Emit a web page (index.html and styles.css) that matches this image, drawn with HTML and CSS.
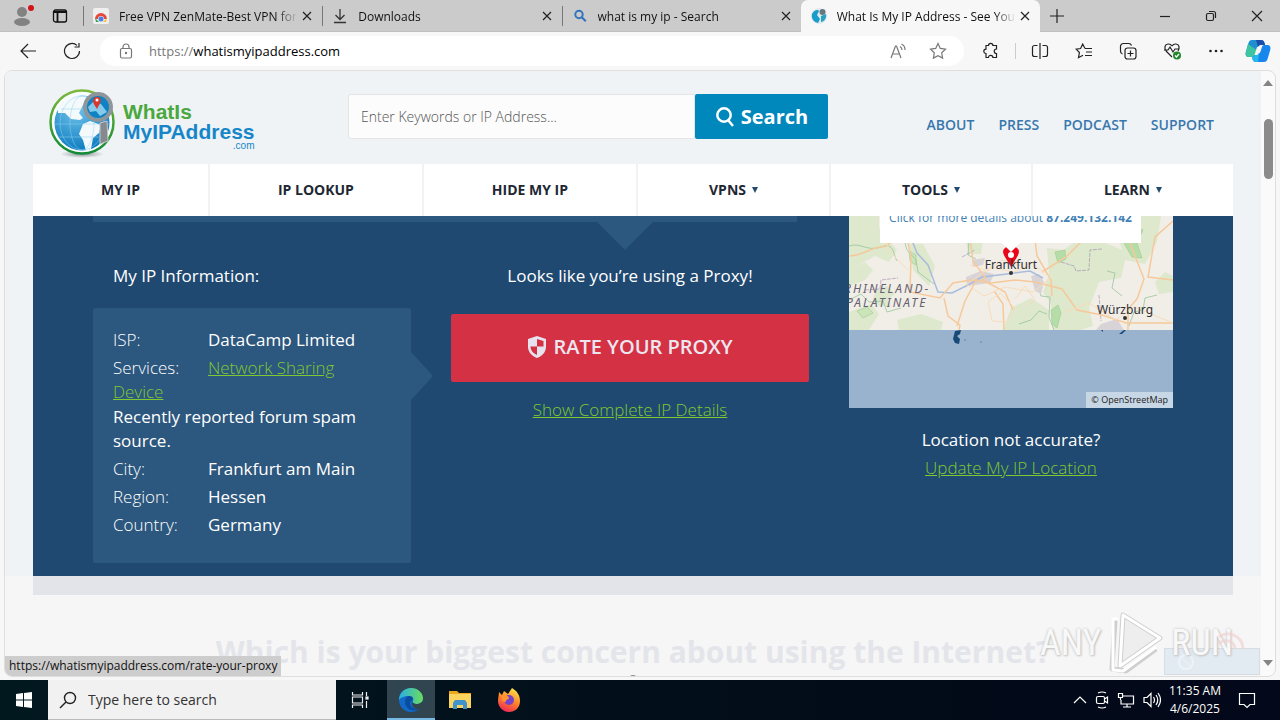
FILE: index.html
```html
<!DOCTYPE html>
<html lang="en">
<head>
<meta charset="utf-8">
<title>What Is My IP Address</title>
<link rel="stylesheet" href="styles.css">
</head>
<body>
<div class="tabbar">
  <button class="tabbar-btn profile" aria-label="Profile">
    <svg width="26" height="26" viewBox="0 0 26 26"><circle cx="13" cy="9" r="5" fill="#828282"/><ellipse cx="13" cy="19" rx="8" ry="4" fill="#828282"/><circle cx="22" cy="5" r="3" fill="#d3131c"/></svg>
  </button>
  <button class="tabbar-btn" aria-label="Workspaces">
    <svg width="16" height="16" viewBox="0 0 16 16" fill="none" stroke="#111" stroke-width="1.3"><rect x="1.5" y="2" width="13" height="12" rx="2"/><path d="M2 4h12M5.500 4v10" stroke-width="1.800"/></svg>
  </button>
  <div class="tabs">
    <div class="tab">
      <svg width="16" height="16" viewBox="0 0 16 16"><rect width="16" height="16" rx="2" fill="#efefef"/><path d="M2 11a6 6 0 0 1 12 0l-3 0a3 3 0 0 0-6 0z" fill="#e5493a"/><path d="M2 10l4 4H3z" fill="#34a853"/><path d="M14 10l-4 4h3z" fill="#fbc02d"/><circle cx="8" cy="11" r="2.500" fill="#4a80e8"/></svg>
      <span class="tab-title">Free VPN ZenMate-Best VPN for Chrome</span>
      <button class="close" aria-label="Close tab"><svg width="10" height="10" viewBox="0 0 10 10"><path d="M1 1l8 8M9 1l-8 8"/></svg></button>
    </div>
    <div class="tab">
      <svg width="16" height="16" viewBox="0 0 16 16" fill="none" stroke="#333" stroke-width="1.300"><path d="M8 1v10M3.500 7L8 11.500 12.500 7M2 14.500h12"/></svg>
      <span class="tab-title">Downloads</span>
      <button class="close" aria-label="Close tab"><svg width="10" height="10" viewBox="0 0 10 10"><path d="M1 1l8 8M9 1l-8 8"/></svg></button>
    </div>
    <div class="tab">
      <svg width="16" height="16" viewBox="0 0 16 16" fill="none" stroke="#2f74bd" stroke-width="2"><circle cx="7" cy="6.500" r="3.700"/><path d="M9.800 9.300l4 4"/></svg>
      <span class="tab-title">what is my ip - Search</span>
      <button class="close" aria-label="Close tab"><svg width="10" height="10" viewBox="0 0 10 10"><path d="M1 1l8 8M9 1l-8 8"/></svg></button>
    </div>
    <div class="tab active">
      <svg width="16" height="16" viewBox="0 0 16 16"><circle cx="8" cy="8" r="8" fill="#dfe9ee"/><path d="M1 6c2-4 6-5 7-3L6 7l3 4-2 4C3 14 0 11 1 6z" fill="#189cc9"/><path d="M10 8l5-2c1 4-2 8-5 8z" fill="#26a3c4"/><circle cx="11.500" cy="4" r="3" fill="#687780"/></svg>
      <span class="tab-title">What Is My IP Address - See Your Public</span>
      <button class="close" aria-label="Close tab"><svg width="10" height="10" viewBox="0 0 10 10"><path d="M1 1l8 8M9 1l-8 8"/></svg></button>
    </div>
  </div>
  <button class="newtab" aria-label="New tab"><svg width="14" height="14" viewBox="0 0 14 14"><path d="M7 0v14M0 7h14"/></svg></button>
  <div class="win-controls">
    <button aria-label="Minimize"><svg width="12" height="12" viewBox="0 0 12 12"><path d="M1 6.500h10"/></svg></button>
    <button aria-label="Restore"><svg width="12" height="12" viewBox="0 0 12 12"><rect x="1.500" y="3.500" width="7" height="7" rx="1.500"/><path d="M4 1.500h4.500a2 2 0 0 1 2 2V8"/></svg></button>
    <button aria-label="Close"><svg width="12" height="12" viewBox="0 0 12 12"><path d="M1 1l10 10M11 1L1 11"/></svg></button>
  </div>
</div>

<div class="toolbar">
  <button class="tool" aria-label="Back"><svg width="18" height="18" viewBox="0 0 18 18"><path d="M17 9H2M9 2L2 9l7 7"/></svg></button>
  <button class="tool" aria-label="Refresh"><svg width="18" height="18" viewBox="0 0 18 18"><path d="M16.500 9a7.500 7.500 0 1 1-2.500-5.600M16 1v4h-4.500"/></svg></button>
  <div class="address">
    <svg class="lock" width="14" height="16" viewBox="0 0 14 16"><rect x="1.500" y="5.500" width="11" height="9.500" rx="1.500"/><path d="M4 5.500V4a3 3 0 0 1 6 0v1.500"/><circle cx="7" cy="10" r=".6"/></svg>
    <div class="url"><span>https://</span>whatismyipaddress.com</div>
    <button class="in-address" aria-label="Read aloud"><svg width="18" height="16" viewBox="0 0 18 16"><path d="M2 15L6.500 3h1L12 15M3.500 11h7M11 3.500c1.500.8 2 2 2 3.500M12.500 1c2.500 1.200 3.700 3.300 3.500 6"/></svg></button>
    <button class="in-address" aria-label="Add to favorites"><svg width="18" height="18" viewBox="0 0 18 18"><path d="M9 1.500l2.300 4.900 5.200.7-3.800 3.700.9 5.300L9 13.600l-4.600 2.500.9-5.300L1.500 7.100l5.200-.7z"/></svg></button>
  </div>
  <button class="tool ext" aria-label="Extensions"><svg width="18" height="18" viewBox="0 0 18 18"><path d="M4 3.500h2.500a2.200 2.200 0 0 1 4.400 0h3.600V7a2 2 0 0 0 0 4.500v4h-3.600a2.200 2.200 0 0 0-4.400 0H4v-4a2.200 2.200 0 1 1 0-4.400z"/></svg></button>
  <i class="divider"></i>
  <button class="tool" aria-label="Split screen"><svg width="18" height="18" viewBox="0 0 18 18"><path d="M6.500 3.500h-3a2 2 0 0 0-2 2v7a2 2 0 0 0 2 2h3M11.500 3.500h3a2 2 0 0 1 2 2v7a2 2 0 0 1-2 2h-3M9 1v16"/></svg></button>
  <button class="tool" aria-label="Favorites"><svg width="18" height="18" viewBox="0 0 18 18"><path d="M10 6.500L7.700 2 5.600 6.500l-4.500.6 3.300 3.400-.9 5.200L8 13.200M10 6.500h7M11 10h6M10 13.500h7"/></svg></button>
  <button class="tool" aria-label="Collections"><svg width="18" height="18" viewBox="0 0 18 18"><rect x="6" y="6" width="11" height="11" rx="2.500"/><path d="M11.500 8.500v6M8.500 11.500h6M3.500 12A3 3 0 0 1 1.500 9V4a3 3 0 0 1 3-2.500h5a3 3 0 0 1 3 2"/></svg></button>
  <button class="tool" aria-label="Browser essentials"><svg width="18" height="18" viewBox="0 0 18 18"><path d="M9 4C7 1 3 1.500 2 4.500c-.5 2 0 3.500 1.500 5L9 15M9 4c2-3 6-2.500 7 .5.400 2 0 3-1 4.500M1 8h4l2-3 3 5 2-3h4"/><circle cx="14" cy="13.500" r="4" fill="#23862d" stroke="none"/><path d="M12 13.500l1.500 1.500 2.500-3" stroke="#fff"/></svg></button>
  <button class="tool" aria-label="Settings and more"><svg width="18" height="18" viewBox="0 0 18 18"><g fill="#222" stroke="none"><circle cx="3.500" cy="9" r="1.300"/><circle cx="9" cy="9" r="1.300"/><circle cx="14.500" cy="9" r="1.300"/></g></svg></button>
  <button class="tool copilot" aria-label="Copilot"><svg width="26" height="24" viewBox="0 0 26 24"><g stroke="none"><path d="M7 1h9c2 0 3 1 3.500 3l.5 2h-4c-2 0-3 1-3.600 3l-1.700 6C10 17 9 18 7 18H4c-3 0-4-2-3.200-5l2.500-8.500C4 2 5 1 7 1z" fill="#1f8fd0"/><path d="M3 5L1 13c-.8 3 .5 5 3 5h3c2 0 3-1 3.500-3l1-4z" fill="#3cc5a0"/><path d="M16 1c2 0 3 1 3.500 3l.6 2H16c-1.500 0-2.500.5-3 2L11 1z" fill="#1b4ea8"/><path d="M19 6h3c3 0 4 2 3.200 5l-2.500 8.500C22 22 21 23 19 23h-8c-2 0-3-1-3.500-3L7 18c2 0 3-1 3.500-3h2c1.500 0 2.500-1 3-2.500L17 8c.4-1.300 1-2 2-2z" fill="#1787ee"/><path d="M7 18l.5 2c.5 2 1.500 3 3.500 3h2l1-8h-3.500c-.5 2-1.500 3-3.500 3z" fill="#24b8ec"/><path d="M12 8l-2.500 8h3L15 8z" fill="#f7f7f8"/></g></svg></button>
</div>

<div class="viewport">
  <div class="page">
    <div class="upper">
      <div class="container">
        <header class="site-header">
          <a class="brand" href="#" aria-label="WhatIsMyIPAddress.com">
            <svg width="70" height="72" viewBox="0 0 70 72">
              <defs>
                <linearGradient id="ring" x1="0" y1="0" x2="0" y2="1"><stop offset="0" stop-color="#7db93c"/><stop offset="1" stop-color="#128a36"/></linearGradient>
                <radialGradient id="sea" cx=".4" cy=".25" r=".8"><stop offset="0" stop-color="#72c4ea"/><stop offset="1" stop-color="#0878be"/></radialGradient>
                <radialGradient id="shade"><stop offset="0" stop-color="#8c9298"/><stop offset="1" stop-color="#eff3f5"/></radialGradient>
              </defs>
              <ellipse cx="33" cy="65" rx="22" ry="4" fill="url(#shade)"/>
              <circle cx="33" cy="33" r="31.500" fill="#f9fcfd" stroke="url(#ring)" stroke-width="2.500"/>
              <circle cx="33" cy="34" r="27.500" fill="url(#sea)"/>
              <path d="M9 19C15 8 26 5 37 7l3 6-6 3-4 8 4 5-3 2-9-1-6-6-7 0z" fill="#f4fafc"/>
              <path d="M34 35l7-3 11 4-2 8-6 5-2 11-5 2-3-11-4-6z" fill="#f4fafc"/>
              <g fill="none" stroke="#8ed2f2" stroke-width=".5"><ellipse cx="33" cy="34" rx="12" ry="27"/><ellipse cx="33" cy="34" rx="22" ry="27"/><path d="M6 35h54M10 48h46M12 20h40"/></g>
              <path d="M51 34l7-2 1 20-8 3z" fill="#858a8f" stroke="#c4c8cb"/>
              <circle cx="49" cy="18" r="13" fill="#0d83c5" stroke="#8f969b" stroke-width="4"/>
              <path d="M39 18l6-6 7 3 6 8-7 4-4-5-6 1z" fill="#85caea"/>
              <path d="M48 20c-3-5-5-7-3.500-10 1.500-3 6-3 7 0 1 3-1 5-3.500 10z" fill="#d8392e"/><circle cx="48" cy="11" r="1.500" fill="#fff"/>
            </svg>
            <span class="wordmark"><span class="w1">WhatIs</span><span class="w2">MyIPAddress</span><span class="w3">.com</span></span>
          </a>
          <form class="search">
            <input type="text" aria-label="Enter Keywords or IP Address" placeholder="Enter Keywords or IP Address...">
            <button type="button"><svg width="20" height="20" viewBox="0 0 20 20" fill="none" stroke="#fff" stroke-width="2.500"><circle cx="9" cy="8" r="6.700"/><path d="M13 13l5 6"/></svg>Search</button>
          </form>
          <nav class="toplinks" aria-label="Site"><a href="#">ABOUT</a><a href="#">PRESS</a><a href="#">PODCAST</a><a href="#">SUPPORT</a></nav>
        </header>
        <nav class="mainnav" aria-label="Main">
          <a href="#">MY IP</a><a href="#">IP LOOKUP</a><a href="#">HIDE MY IP</a><a class="more" href="#">VPNS<i></i></a><a class="more" href="#">TOOLS<i></i></a><a class="more" href="#">LEARN<i></i></a>
        </nav>
        <main class="hero">
          <div class="hero-main">
            <div class="strip"></div>
            <div class="cols">
              <section class="info">
                <h2>My IP Information:</h2>
                <div class="card">
                  <p><span>ISP:</span>DataCamp Limited</p>
                  <p class="tight"><span>Services:</span><a href="#">Network Sharing Device</a></p>
                  <p>Recently reported forum spam source.</p>
                  <p><span>City:</span>Frankfurt am Main</p>
                  <p><span>Region:</span>Hessen</p>
                  <p><span>Country:</span>Germany</p>
                </div>
              </section>
              <section class="proxy">
                <h2>Looks like you’re using a Proxy!</h2>
                <button class="rate"><svg width="20" height="22" viewBox="0 0 20 22"><path d="M10 0l9 3v8c0 5-4 9-9 11-5-2-9-6-9-11V3z" fill="#e6e3ef"/><path d="M10 3l6.500 2v5.500H10zM10 10.500V19c-3.500-1.500-6.500-4.500-6.500-8.500z" fill="#d43145"/></svg>RATE YOUR PROXY</button>
                <a href="#">Show Complete IP Details</a>
              </section>
            </div>
          </div>
          <section class="location">
            <div class="map">
              <svg class="tiles" viewBox="0 0 324 114" preserveAspectRatio="xMidYMin slice" aria-hidden="true">
                <rect width="324" height="114" fill="#f1eee8"/>
                <g fill="#dde8cd">
                  <path d="M0 0h30v12l18 22-8 12-14-6-26 14zM0 54l16-8 8 8-8 10-16 6zM28 74l10-4 8 8-8 6 4 6-12 0-6-8z"/>
                  <path d="M60 28l14 0 12 22-6 20-16-16zM0 96l22-8 8 10-10 16H0zM48 104l24-6 22 8-2 8H50zM116 24l18 0-2 14-12 0z"/>
                  <path d="M198 32l16 2 12-8h28l24 10-6 26-22 4-10 26 4 18-30 10-10-6-2-26-8-12 6-18zM162 92l20-10 18 12v20h-46z"/>
                  <path d="M272 0h40l-4 26-12 22-20-4-6-20zM306 66l10-10 8 4v16l-14 2z"/>
                </g>
                <g fill="#b6dda8" stroke="#9dc993" stroke-width=".6"><path d="M272 16l9-9 13 7-6 13 5 15-10-1-7-12zM206 36l10-2 1 9-8 4zM202 94l7-5 3 8-4 15-5-4z"/><path d="M60 35l7 4 0 10-6-4zM8 95l10-4 6 6-10 5z" fill="#cbe4b8"/></g>
                <g fill="none" stroke="#97c59a" stroke-width=".8"><path d="M0 30c12-4 18 6 32 1s12 8 16 14M54 20l4 14 9 10 2 12 16 12M0 84l12-6 8 8 14-1 4 11 14-4M120 25l-1 14 8 4M188 64l4 16 9 1-1 20 5 13M258 55l8 2-3 15 10 8"/><path d="M170 108l12-4 8-9 8 3M280 110l5-14 9-2 2-12 12-3"/></g>
                <g fill="none" stroke="#9c86aa" stroke-width=".6" stroke-dasharray="4 1"><path d="M212 46l13 4 2 5 13-1 1-20 12-1M16 74l15-1 1-9 17-2M250 79l2 26M113 41l13-7"/></g>
                <g fill="#d8d3d6"><path d="M117 61l15-6 13 3-4 9-23 3zM182 60l8-2 5 8-3 12-6-3zM252 108l16-5 7 11h-28zM123 44l13-2-2 7-10 2z"/></g>
                <path d="M60 17l8 20 11 12 10 27 14 1 14-7 16-9 25-3 23-3 13 7" fill="none" stroke="#a9bcdc" stroke-width="1.500"/>
                <g fill="none" stroke="#f6c99b" stroke-width="1.500">
                  <path d="M0 40c14 0 20-8 32-9s12-13 25-14l5 24-1 35 30 6 13-15 18-3 20 3 24-3 20 2 27 7 15 21 25 5 24 8h67"/>
                  <path d="M120 16l4 29 13 18M145 75l9 13 1 26M95 82l4 18 12 9-1 5M108 110l8-25 12-22M193 56l24-15 16-16 14-9M278 19l8 21 9 23-7 20-9 10 0 21M324 5l-18 16-7 40 25 3M185 16l3 24 14 24 1 16M164 94l-8-18-24-13"/>
                </g>
                <g fill="none" stroke="#f8dcbc" stroke-width="1"><path d="M118 68l24-17 23 5 18-9 19 15-18 14-28-5-21 9-18-12M139 86l12-9 15 15-9 14-14-1zM166 83l10-13 10 14-10 7M121 49l18 6 14-11 21 6M216 96l24-9 27 17 18-13 39 16M32 14l9 22 18 18"/></g>
                <path d="M162 49l-6-10c-3-6 3-10 6-4 3-6 9-2 6 4z" fill="#e8081a" stroke="#e8081a" stroke-width="2"/><circle cx="162" cy="39" r="3" fill="#fff"/>
                <g font-family="Noto Sans, Open Sans, sans-serif" fill="#303034">
                  <text x="162" y="53" font-size="12" text-anchor="middle">Frankfurt</text>
                  <text x="276" y="98" font-size="12" text-anchor="middle">Würzburg</text>
                  <g font-style="italic" font-size="12" fill="#66606f" letter-spacing="2"><text x="-5" y="77">RHINELAND-</text><text x="-3" y="91">PALATINATE</text></g>
                </g>
                <circle cx="162" cy="57" r="2" fill="#333"/><circle cx="276" cy="102" r="2" fill="#333"/>
              </svg>
              <div class="popup"><a href="#">Click for more details about <b>87.249.132.142</b></a></div>
              <svg class="specks" width="324" height="16" viewBox="0 0 324 16" aria-hidden="true"><path d="M106 1l6-1-1 4-3 2 3 3-1 5-4-1-2-4 1-4zM270 4l5-4h2l-4 4zM252 0h2v2z" fill="#174a77"/><path d="M115 10h2M131 12h2" stroke="#6688a8"/></svg>
              <div class="credit">© OpenStreetMap</div>
            </div>
            <p class="accuracy">Location not accurate?<br><a href="#">Update My IP Location</a></p>
          </section>
        </main>
      </div>
    </div>
    <div class="container">
      <div class="band"></div>
      <h1 class="question">Which is your biggest concern about using the Internet?</h1>
    </div>
    <i class="dot"></i>
  </div>
  <div class="scrollbar">
    <svg width="10" height="6" viewBox="0 0 10 6"><path d="M0 6L5 0l5 6z"/></svg>
    <i></i>
    <svg width="10" height="6" viewBox="0 0 10 6"><path d="M0 0l5 6 5-6z"/></svg>
  </div>
  <div class="status">https://whatismyipaddress.com/rate-your-proxy</div>
  <div class="badge"><svg width="30" height="18" viewBox="0 0 30 18"><circle cx="13" cy="9" r="7" fill="none" stroke="#eef3f8" stroke-width="2"/><path d="M8 4l10 10" stroke="#eef3f8"/></svg></div>
  <div class="watermark">
    <span>ANY</span>
    <svg width="60" height="62" viewBox="0 0 60 62"><g fill="#eeeeee" stroke="#cfcfcf" stroke-width="5" stroke-linejoin="round"><path d="M17 3L54 26 14 54z"/><path d="M9 8L6 57l14 2 30-22" fill="none"/></g><g fill="none" stroke="#fff" stroke-width="3" stroke-linejoin="round"><path d="M17 3L54 26 14 54z"/><path d="M12 7H7v51l10 1 33-24"/></g></svg>
    <span>RUN</span>
    <svg class="waves" width="30" height="24" viewBox="0 0 30 24" fill="none" stroke="#f2cfcf" stroke-width="3" opacity=".6"><path d="M2 10a15 15 0 0 1 24 11M2 17a9 9 0 0 1 16 5"/></svg>
  </div>
</div>

<footer class="taskbar">
  <button class="start" aria-label="Start"><svg width="16" height="16" viewBox="0 0 16 16" fill="#fff"><path d="M0 2l7-1v6.500H0zM8 1l8-1v7.500H8zM0 8.500h7V15l-7-1zM8 8.500h8V16l-8-1z"/></svg></button>
  <label class="tasksearch"><svg width="18" height="18" viewBox="0 0 18 18" fill="none" stroke="#222" stroke-width="1.400"><circle cx="11" cy="7" r="5.500"/><path d="M7 11l-6 6"/></svg><input type="text" aria-label="Search" placeholder="Type here to search"></label>
  <button class="app taskview" aria-label="Task view"><svg width="18" height="18" viewBox="0 0 18 18" fill="none" stroke="#eee" stroke-width="1.200"><path d="M1.500 1v3h10V1M1.500 17v-3h10v3M1.500 6h10v6h-10zM15.500 1v4M15.500 10v7"/><rect x="15" y="6" width="2" height="2" fill="#eee"/></svg></button>
  <button class="app current" aria-label="Microsoft Edge"><svg width="24" height="24" viewBox="0 0 24 24"><defs><linearGradient id="edge"><stop offset="0" stop-color="#2aaee6"/><stop offset="1" stop-color="#6bdc5b"/></linearGradient></defs><circle cx="12" cy="12" r="12" fill="#1269c7"/><path d="M0 12C0 5 5 0 12 0s12 5 12 10c0 4-3 6-6 6s-5-1-4-3 0-5-4-5c-5 0-9 2-10 4z" fill="url(#edge)"/><path d="M10 8c-4 1-5 6-3 10s8 6 13 3c-5 1-9-2-9-6 0-2 2-3 3-4 0-2-2-3-4-3z" fill="#0a4d9e"/><path d="M14 13c-1 2 1 3 4 3 2 0 4-1 6-3v6l-4 2c-5 1-9-4-6-8z" fill="#30454f"/></svg></button>
  <button class="app" aria-label="File Explorer"><svg width="22" height="20" viewBox="0 0 22 20"><path d="M0 1h8l2 2h12v4H0z" fill="#e9a820"/><path d="M0 4h22v14H0z" fill="#fbd45f"/><path d="M4 19v-6l2-3h10l2 3v6h-4v-4H8v4z" fill="#3e94cb"/></svg></button>
  <button class="app" aria-label="Firefox"><svg width="24" height="24" viewBox="0 0 24 24"><defs><linearGradient id="fox" x1=".7" y1="0" x2=".3" y2="1"><stop offset="0" stop-color="#ffe34a"/><stop offset=".5" stop-color="#ff8528"/><stop offset="1" stop-color="#ee2457"/></linearGradient></defs><path d="M2 4l3 3 2-4 4 3 4-6c5 3 8 7 8 13 0 7-5 11-11 11S1 19 1 13c0-4 1-6 1-9z" fill="url(#fox)"/><circle cx="12" cy="12" r="5" fill="#7542c9"/><path d="M5 8c4-1 7 0 7 2s-4 1-3 4c-4 0-5-3-4-6z" fill="#ff9430"/></svg></button>
  <div class="tray">
    <svg width="14" height="14" viewBox="0 0 14 14"><path d="M1 10l6-6 6 6"/></svg>
    <svg width="14" height="18" viewBox="0 0 14 18"><rect x="1.500" y="5.500" width="8" height="7" rx="1.500"/><path d="M9.500 8l3-2v6l-3-2M3 2q4-2 8 0M3 16q4 2 8 0"/></svg>
    <svg width="18" height="16" viewBox="0 0 18 16"><path d="M6 4h10.500v8H4V8M10 12v3M6 15h8M1.500 1.500h4v4h-4zM3.500 5.500V8"/></svg>
    <svg width="18" height="16" viewBox="0 0 18 16"><path d="M1 5.500h3l4-4v13l-4-4H1zM10.500 5q2 3 0 6M13 3q3.500 5 0 10M15 1q5 7 0 14"/></svg>
    <time>11:35 AM<br>4/6/2025</time>
    <button aria-label="Notifications"><svg width="18" height="18" viewBox="0 0 18 18"><path d="M1.500 2.500h15v11H12l-3 3-3-3H1.500z"/></svg></button>
  </div>
</footer>
</body>
</html>
```
FILE: styles.css
```css
* { box-sizing: border-box; }
body {
  margin: 0;
  height: 100vh;
  display: flex;
  flex-direction: column;
  overflow: hidden;
  background: #f7f7f8;
  font-family: "Open Sans", "Noto Sans", sans-serif;
  font-size: 12px;
  color: #111;
}
button {
  border: 0;
  padding: 0;
  background: none;
  font: inherit;
  color: inherit;
  display: flex;
  align-items: center;
  justify-content: center;
}
svg { flex: none; display: block; }
h1, h2, p { margin: 0; font-weight: 400; }

/* Tab strip */
.tabbar { flex: 0 0 32px; display: flex; background: #cbcbcb; box-shadow: inset 0 -1px #c0c0c0; }
.tabbar-btn { width: 32px; }
.profile { width: 44px; }
.tabs { flex: 0 1 957px; min-width: 0; display: flex; margin-left: 7px; }
.tab {
  flex: 1 1 0;
  min-width: 0;
  display: flex;
  align-items: center;
  gap: 10px;
  padding: 0 10px;
  background: linear-gradient(#777, #777) left center / 1px 20px no-repeat;
}
.tab.active { background: #f7f7f7; border-radius: 7px 7px 0 0; }
.tab-title {
  flex: 1;
  min-width: 0;
  margin-right: -6px;
  overflow: hidden;
  white-space: nowrap;
  mask-image: linear-gradient(to right, #000 88%, transparent);
}
.close svg, .newtab svg, .win-controls svg { fill: none; stroke: #222; stroke-width: 1.2; }
.newtab { width: 34px; }
.win-controls { margin-left: auto; display: flex; }
.win-controls button { width: 46px; }

/* Toolbar */
.toolbar { flex: 0 0 38px; display: flex; align-items: center; padding: 0 2px 0 6px; }
.tool { width: 44px; height: 32px; }
.tool.copilot { width: 40px; }
.toolbar svg { fill: none; stroke: #222; stroke-width: 1.2; }
.address {
  flex: 1;
  height: 30px;
  margin: 0 5px 0 6px;
  display: flex;
  align-items: center;
  padding: 0 6px 0 19px;
  border-radius: 15px;
  background: #fff;
}
.toolbar .address svg { stroke: #777; }
.url { flex: 1; margin-left: 16px; font-size: 13px; color: #000; }
.url span { color: #777; }
.in-address { width: 40px; height: 30px; }
.divider { width: 1px; height: 16px; margin: 0 2px; background: #ccc; }

/* Web page */
.viewport {
  flex: 1;
  min-height: 0;
  display: flex;
  position: relative;
  margin: 0 4px 3px;
  border: 1px solid #dedede;
  border-radius: 8px;
  background: #fafafa;
  overflow: hidden;
}
.page { flex: 1; min-width: 0; position: relative; overflow: hidden; background: #f6f6f6; }
.upper { background: #eff3f5; }
.container { max-width: 1200px; margin: 0 auto; }
.site-header { display: flex; align-items: flex-start; height: 93px; }
.brand { display: flex; align-items: flex-start; padding: 18px 0 0 16px; width: 315px; text-decoration: none; }
.wordmark {
  display: flex;
  flex-direction: column;
  margin: 13px 0 0 4px;
  font: 700 21px/20px "Liberation Sans", sans-serif;
}
.w1 { color: #4ba83e; }
.w2 { color: #1786c9; }
.w3 { align-self: flex-end; font-weight: 400; font-size: 10px; line-height: 8px; color: #1786c9; }
.search { display: flex; margin-top: 23px; width: 480px; height: 45px; }
.search input {
  flex: 1;
  min-width: 0;
  padding: 0 12px;
  border: 1px solid #e2e4e6;
  border-radius: 3px 0 0 3px;
  background: #fcfcfc;
  font: 300 14px "Open Sans", sans-serif;
}
.search input::placeholder { color: #555; opacity: 1; }
.search button {
  width: 133px;
  gap: 6px;
  border-radius: 2px;
  background: #0088bd;
  color: #fff;
  font-weight: 700;
  font-size: 20px;
}
.toplinks { display: flex; gap: 24px; margin: 44px 19px 0 auto; }
.toplinks a { color: #3877ae; font-size: 14px; line-height: 20px; font-weight: 600; text-decoration: none; }
.mainnav { display: flex; gap: 2px; height: 52px; }
.mainnav a {
  flex: 1 1 auto;
  display: flex;
  align-items: center;
  justify-content: center;
  gap: 6px;
  padding-bottom: 1px;
  background: #fff;
  color: #1d2833;
  font-size: 14px;
  font-weight: 700;
  text-decoration: none;
}
.mainnav a.more { padding-left: 3px; padding-right: 3px; }
.mainnav i { border: 3px solid transparent; border-top: 6px solid #244c70; border-bottom: 0; }

/* Hero */
.hero { display: flex; justify-content: space-between; height: 360px; padding: 0 60px; background: #1f4971; color: #fff; font-size: 17px; line-height: 24px; overflow: hidden; }
.hero a { color: #80c92f; }
.hero-main { width: 716px; }
.strip { position: relative; height: 6px; margin-right: 12px; background: #2c577e; }
.strip::after { content: ""; position: absolute; left: 504px; top: 6px; border: 28px solid transparent; border-top-color: #2c577e; border-bottom: 0; }
.cols { display: flex; gap: 40px; padding-top: 42px; }
.cols h2 { font-size: 17px; line-height: 24px; }
.info { width: 318px; }
.info h2 { padding-left: 20px; }
.card { position: relative; margin-top: 20px; padding: 20px 30px 26px 20px; background: #2c577e; border-radius: 2px; }
.card::after { content: ""; position: absolute; left: 100%; top: 44px; border: 24px solid transparent; border-left: 22px solid #2c577e; border-right: 0; }
.card p { margin-bottom: 4px; }
.card p.tight { margin-bottom: 1px; }
.card p:last-child { margin-bottom: 0; }
.card span { display: inline-block; width: 95px; font-weight: 300; }
.card a, .proxy a, .accuracy a { font-weight: 300; }
.proxy { flex: 1; text-align: center; }
.rate { width: 100%; height: 68px; margin: 26px 0 16px; padding-bottom: 2px; gap: 6px; border-radius: 2px; background: #d43145; color: #ece6ef; font-weight: 600; font-size: 20px; }
.location { width: 324px; text-align: center; }
.map { position: relative; height: 192px; background: #99b2ce; overflow: hidden; }
.tiles { width: 100%; height: 114px; }
.popup { position: absolute; left: 31px; right: 32px; top: -20px; height: 47px; padding-top: 13px; background: #fff; font-size: 12px; line-height: 18px; white-space: nowrap; }
.popup::after { content: ""; position: absolute; left: 122px; top: 47px; border: 9px solid transparent; border-top-color: #fff; border-bottom: 0; }
.popup a { color: #4180b4; font-weight: 400; text-decoration: none; }
.credit { position: absolute; right: 0; bottom: 0; padding: 0 5px; background: #c8d7e5; color: #222; font-size: 9px; line-height: 16px; }
.accuracy { margin-top: 18px; line-height: 28px; }
.band { height: 19px; background: #e2e4ea; }
.question { margin-top: 36px; text-align: center; font-size: 30px; line-height: 42px; font-weight: 700; color: #e4e5ea; white-space: nowrap; }
.dot { position: absolute; left: 50%; bottom: -9px; width: 10px; height: 10px; margin-left: -5px; border-radius: 50%; background: #8a8a98; }

.scrollbar { width: 14px; display: flex; flex-direction: column; align-items: center; padding: 9px 0 10px; }
.scrollbar svg { fill: #858585; }
.scrollbar i { width: 9px; height: 60px; margin: 33px 0 auto; border-radius: 5px; background: #8b8b8b; }
.status { position: absolute; left: 0; bottom: 0; padding: 0 4px; line-height: 20px; font-size: 12px; background: #cdcdcd; }
.badge { position: absolute; right: 15px; bottom: 1px; width: 96px; height: 27px; padding: 4px 8px; border: 1px solid #d9dde2; background: #e2eaf2; }
.watermark {
  position: absolute;
  right: 42px;
  bottom: 2px;
  display: flex;
  align-items: center;
  gap: 5px;
  font: 36px/40px "Liberation Sans Narrow", "Roboto Condensed", "Liberation Sans", sans-serif;
  color: #f8f8f8;
  text-shadow: 0 0 3px #c4c4c4, 1px 1px 2px #c4c4c4;
}
.waves { position: absolute; right: -14px; top: 15px; }

/* Taskbar */
.taskbar { flex: 0 0 40px; display: flex; background: linear-gradient(to right, #02181f, #020b18 70%, #03081a); color: #fff; }
.start { width: 48px; }
.tasksearch { width: 288px; display: flex; align-items: center; gap: 11px; padding-left: 11px; background: #f1f1f1; border-bottom: 1px solid #bbb; }
.tasksearch input { flex: 1; min-width: 0; border: 0; padding: 0; background: none; font: 14px "Open Sans", sans-serif; outline: 0; }
.tasksearch input::placeholder { color: #333; opacity: 1; }
.app { width: 49px; }
.app.taskview { width: 51px; padding-right: 3px; }
.app.current { width: 48px; background: #30454f; box-shadow: inset 0 -2px #76b9e4; }
.tray { margin-left: auto; display: flex; align-items: center; gap: 8px; padding-right: 9px; text-align: center; }
.tray svg { fill: none; stroke: #fff; stroke-width: 1.2; }
.tray time { margin-right: -6px; line-height: 18px; }
.tray button { width: 48px; height: 40px; }
```
